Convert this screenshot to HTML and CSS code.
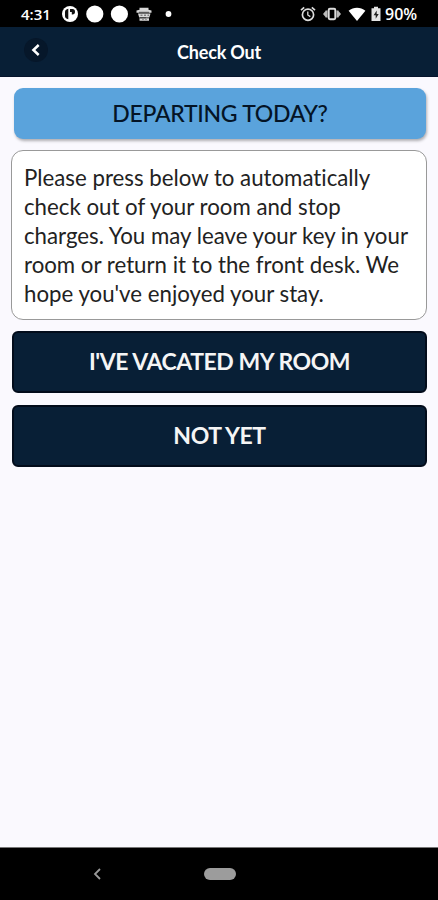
FILE: index.html
```html
<!DOCTYPE html>
<html lang="en">
<head>
  <meta charset="UTF-8">
  <meta name="viewport" content="width=device-width, initial-scale=1.0">
  <title>Check Out</title>
  <link rel="stylesheet" href="styles.css">
</head>
<body>
  <div class="status-bar">
    <span class="clock">4:31</span>
    <svg class="notifications" width="112" height="20" viewBox="0 0 112 20">
      <circle cx="9" cy="10" r="8" fill="#fff"/>
      <path d="M7.300 4.800Q4 5.500 4 8v4q0 2.500 3.300 3.200zM9 5h2.500q2.500 0 2.500 2.700T11.500 10.500H10.800V8H9z" fill="#111"/>
      <circle cx="33.8" cy="10" r="8.6" fill="#fff"/>
      <circle cx="58.4" cy="10" r="8.6" fill="#fff"/>
      <path d="M75.5 6.5l3-.8V3.7h9v2l3 .8v2.3h-15zM77 9.500h12.500l-1.200 4H78.200zM78.500 14.300h9.500v2.500h-9.500z" fill="#d8d8d8"/>
      <path d="M78 8.300h10M79.500 11.200h2m1.500 0h2m1.500 0h1.500M79 13.800h6M81.500 15.500h1m2 0h1" stroke="#222" stroke-width=".7"/>
      <circle cx="107.500" cy="10" r="2.900" fill="#fff"/>
    </svg>
    <div class="system">
      <svg width="16" height="16" viewBox="0 0 16 16" fill="none" stroke="#ddd">
        <circle cx="8" cy="8.700" r="5.600" stroke-width="1.700"/>
        <path d="M1 4.200L4.200 1.400M15 4.200L11.800 1.400" stroke-width="1.700"/>
        <path d="M7.800 5.500v3.500l2.500 1.600" stroke-width="1.300"/>
      </svg>
      <svg width="18" height="16" viewBox="0 0 18 16">
        <path d="M0 8l2.500-3v6zM18 8l-2.500-3v6zM2.500 4.500h2v7h-2zM13.500 4.500h2v7h-2z" fill="#bbb"/>
        <rect x="5.700" y="2.700" width="6.600" height="10.600" rx="1.200" fill="none" stroke="#ddd" stroke-width="1.900"/>
      </svg>
      <svg width="18" height="16" viewBox="0 0 18 16">
        <path d="M.6 4.800C5.500.7 12.500.7 17.400 4.800L9 15z" fill="#fff"/>
      </svg>
      <svg width="10" height="16" viewBox="0 0 10 16">
        <path d="M3 .7h4v1.600h2.500V15H.5V2.300H3z" fill="#e4e4e4"/>
        <path d="M5.700 4.500L2.600 9.300h2.100v3.500l3-4.800H5.700z" fill="#222"/>
      </svg>
    </div>
    <span class="battery">90%</span>
  </div>

  <header class="header">
    <button class="back" aria-label="Back">
      <svg width="12" height="14" viewBox="0 0 12 14">
        <path d="M8.700 2L3.400 7l5.300 5" fill="none" stroke="#fff" stroke-width="2.500"/>
      </svg>
    </button>
    <h1>Check Out</h1>
  </header>

  <main class="content">
    <h2 class="banner">DEPARTING TODAY?</h2>
    <p class="message">Please press below to automatically check out of your room and stop charges. You may leave your key in your room or return it to the front desk. We hope you've enjoyed your stay.</p>
    <button class="action">I'VE VACATED MY ROOM</button>
    <button class="action">NOT YET</button>
  </main>

  <nav class="nav-bar">
    <svg width="10" height="14" viewBox="0 0 10 14">
      <path d="M8 2L3 7l5 5" fill="none" stroke="#999" stroke-width="1.800"/>
    </svg>
    <span class="home"></span>
  </nav>
</body>
</html>
```

FILE: styles.css
```css
* {
  box-sizing: border-box;
}
body {
  display: flex;
  flex-direction: column;
  height: 900px;
  margin: 0;
  background-color: #faf9fe;
  font-family: Lato, sans-serif;
}
h1, h2, p {
  margin: 0;
}
button {
  font-family: inherit;
  cursor: pointer;
}
svg {
  display: block;
  flex: none;
}
.status-bar {
  display: flex;
  align-items: center;
  height: 27px;
  padding: 1px 19px 0 21px;
  background-color: #000;
  color: #fff;
  font-family: "Open Sans", sans-serif;
  font-size: 15px;
  font-weight: 600;
}
.clock {
  width: 40px;
}
.system {
  display: flex;
  gap: 7px;
  margin-left: auto;
}
.system svg:last-child {
  margin-left: -2px;
}
.battery {
  width: 34px;
  margin-left: 4px;
  font-size: 16px;
}
.header {
  display: grid;
  grid-template-columns: 72px 1fr 72px;
  align-items: center;
  height: 50px;
  background-color: #081f36;
  border-bottom: 1px solid #06142c;
  color: #fff;
}
.back {
  display: flex;
  align-items: center;
  justify-content: center;
  width: 24px;
  height: 24px;
  margin: -3px 0 0 24px;
  padding: 0;
  border: 0;
  border-radius: 50%;
  background-color: #06172a;
}
.header h1 {
  font-size: 18px;
  font-weight: 700;
  letter-spacing: -0.2px;
  text-align: center;
}
.content {
  display: flex;
  flex: 1;
  flex-direction: column;
  padding: 11px 11px 0 12px;
}
.banner {
  height: 51px;
  margin: 0 1px 11px 2px;
  border-radius: 9px;
  background-color: #5aa3dc;
  box-shadow: 1px 2px 3px rgba(0, 0, 0, 0.3);
  color: #041426;
  font-size: 23px;
  font-weight: 500;
  letter-spacing: -0.3px;
  line-height: 51px;
  text-align: center;
}
.message {
  height: 170px;
  margin: 0 0 11px -1px;
  padding: 12px 11px 0 12px;
  border: 1px solid #999;
  border-radius: 12px;
  background-color: #fff;
  color: #222;
  font-size: 22.25px;
  font-variant-ligatures: none;
  line-height: 29px;
}
.action {
  height: 62px;
  margin-bottom: 12px;
  padding: 0 0 2px;
  border: 2px solid #020c1b;
  border-radius: 6px;
  background-color: #081f36;
  color: #f5f5f5;
  font-size: 23px;
  font-weight: 700;
  letter-spacing: -0.45px;
}
.nav-bar {
  display: flex;
  align-items: center;
  height: 53px;
  padding-left: 92px;
  border-top: 1px solid #777;
  background-color: #000;
}
.home {
  width: 32px;
  height: 12px;
  margin-left: 102px;
  border-radius: 6px;
  background-color: #9c9c9c;
}
```
